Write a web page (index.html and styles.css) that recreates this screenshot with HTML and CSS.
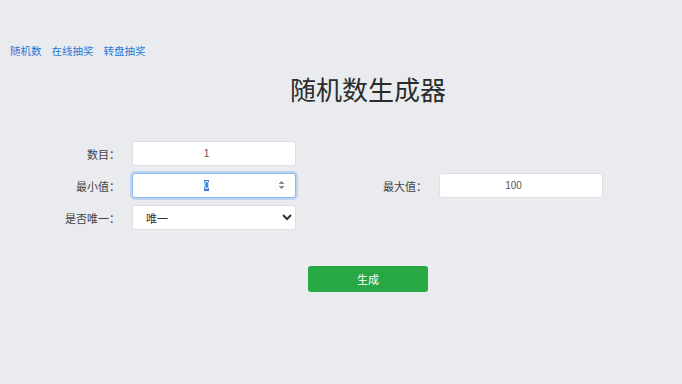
FILE: index.html
```html
<!DOCTYPE html>
<html lang="zh-CN">
<head>
    <meta charset="UTF-8">
    <meta name="viewport" content="width=device-width, initial-scale=1.0">
    <title>随机数生成器</title>
    <link rel="stylesheet" href="styles.css">
</head>
<body>
    <nav class="top-nav">
        <a href="#" class="nav-link">随机数</a>
        <a href="#" class="nav-link">在线抽奖</a>
        <a href="#" class="nav-link">转盘抽奖</a>
    </nav>

    <h1 class="page-title">随机数生成器</h1>

    <form class="gen-form" onsubmit="return false">
        <label class="form-label" for="count">数目：</label>
        <input class="form-input" id="count" type="number" value="1">
        <span></span>
        <span></span>

        <label class="form-label" for="min">最小值：</label>
        <input class="form-input" id="min" type="number" value="0" autofocus>
        <label class="form-label" for="max">最大值：</label>
        <input class="form-input" id="max" type="number" value="100">

        <label class="form-label" for="unique">是否唯一：</label>
        <select class="form-input form-select" id="unique">
            <option>唯一</option>
            <option>不唯一</option>
        </select>
    </form>

    <div class="actions">
        <button class="gen-button" type="button">生成</button>
    </div>

    <script>
        const minInput = document.getElementById('min');
        minInput.focus();
        minInput.select();
    </script>
</body>
</html>
```

FILE: styles.css
```css
body {
    margin: 0;
    background-color: #e9ebef;
    font-family: "Noto Sans CJK SC", "Liberation Sans", sans-serif;
    color: #333;
    min-height: 384px;
}

.top-nav {
    display: flex;
    gap: 10px;
    padding: 43px 0 0 10px;
    font-size: 10.5px;
    line-height: 16px;
}

.nav-link {
    color: #2a78d6;
    text-decoration: none;
}

.page-title {
    margin: 8px 0 0;
    text-align: center;
    padding-left: 54px;
    font-size: 26px;
    font-weight: 400;
    line-height: 44px;
    color: #2b2b2b;
}

.gen-form {
    display: grid;
    grid-template-columns: 132px 164px 143px 164px;
    grid-auto-rows: 25px;
    row-gap: 7px;
    align-items: center;
    margin-top: 30px;
}

.form-label {
    text-align: right;
    padding-right: 12px;
    font-size: 11px;
    color: #444;
}

.form-input {
    box-sizing: border-box;
    height: 25px;
    width: 164px;
    border: 1px solid #dcdfe4;
    border-radius: 3px;
    background-color: #fff;
    font-family: "Liberation Sans", "Noto Sans CJK SC", sans-serif;
    font-size: 10px;
    color: #555;
    text-align: center;
    padding: 0 6px;
    outline: none;
}

.form-input:focus {
    border-color: #86b7f0;
    box-shadow: 0 0 0 2px rgba(120, 170, 235, 0.35);
}

.form-input::selection {
    background-color: #3a7bd5;
    color: #fff;
}

.form-select {
    text-align: left;
    padding-left: 9px;
    font-family: "Noto Sans CJK SC", sans-serif;
    font-size: 11px;
    color: #333;
}

.actions {
    display: flex;
    justify-content: center;
    padding-left: 54px;
    margin-top: 36px;
}

.gen-button {
    width: 120px;
    height: 26px;
    border: none;
    border-radius: 3px;
    background-color: #28a745;
    color: #fff;
    font-family: "Noto Sans CJK SC", sans-serif;
    font-size: 11px;
    cursor: pointer;
}
```
